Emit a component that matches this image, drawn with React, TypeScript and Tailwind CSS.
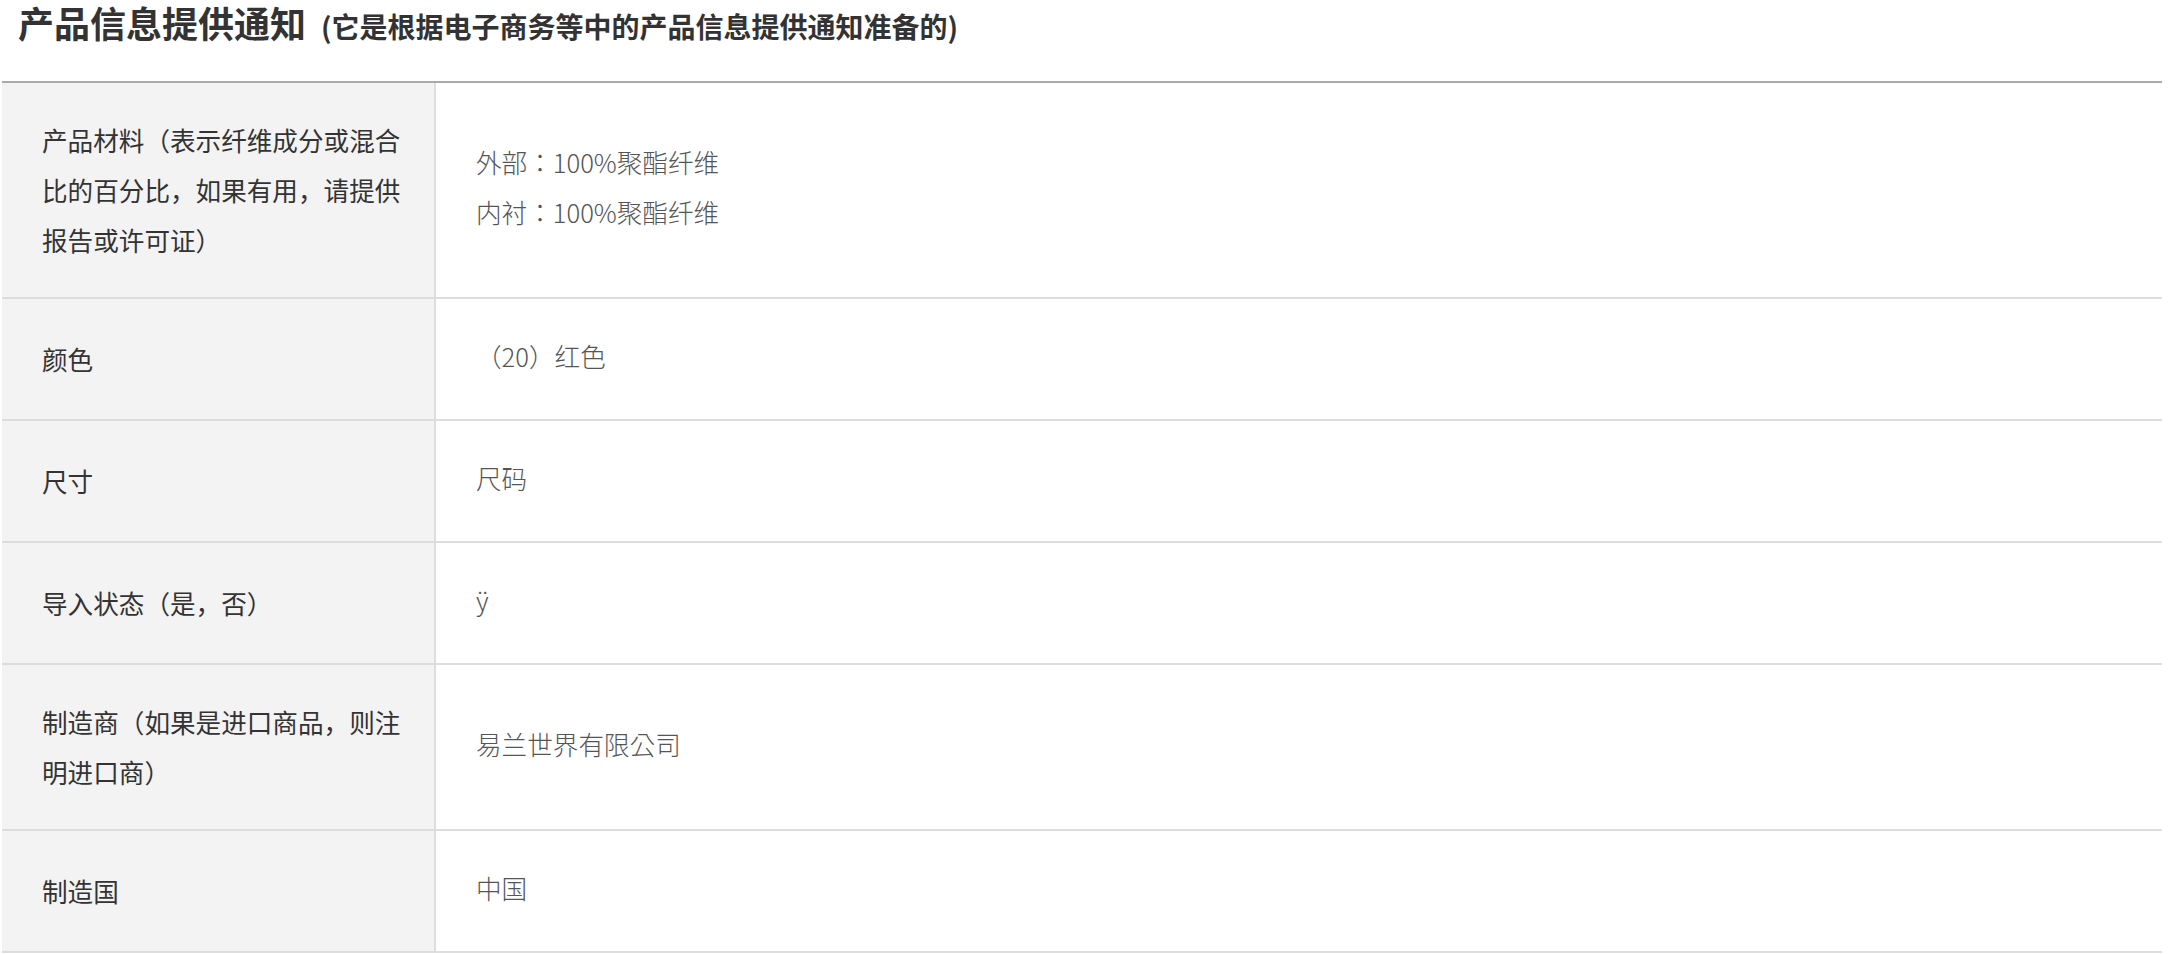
import React from "react";

type Row = {
  label: string;
  values: string[];
};

const rows: Row[] = [
  {
    label: "产品材料（表示纤维成分或混合比的百分比，如果有用，请提供报告或许可证）",
    values: ["外部：100%聚酯纤维", "内衬：100%聚酯纤维"],
  },
  { label: "颜色", values: ["（20）红色"] },
  { label: "尺寸", values: ["尺码"] },
  { label: "导入状态（是，否）", values: ["ÿ"] },
  { label: "制造商（如果是进口商品，则注明进口商）", values: ["易兰世界有限公司"] },
  { label: "制造国", values: ["中国"] },
];

const font = {
  fontFamily: '"Noto Sans CJK SC", "Noto Sans", sans-serif',
};

const valueFont = {
  fontFamily: '"Noto Sans CJK KR", "Noto Sans", sans-serif',
};

export default function App() {
  return (
    <main className="bg-white min-h-screen pl-[2px] pr-[6px]" style={font}>
      <h2 className="flex items-baseline pl-[16px] h-[81px] text-[#333]">
        <span className="text-[36px] leading-[44px] font-bold">产品信息提供通知</span>
        <span className="ml-[15px] text-[28px] leading-[44px] font-bold">
          (它是根据电子商务等中的产品信息提供通知准备的)
        </span>
      </h2>

      <section className="border-t-2 border-[#aaaaaa]">
        {rows.map((row) => (
          <div key={row.label} className="flex border-b-2 border-[#dddddd]">
            <div className="w-[434px] shrink-0 bg-[#f3f3f3] border-r-2 border-[#dddddd] min-h-[120px] py-[32px] pl-[40px] pr-[30px] flex items-center">
              <p className="text-[25.6px] leading-[50px] text-[#333]">{row.label}</p>
            </div>
            <div
              className="flex-1 min-h-[120px] pt-[29px] pb-[35px] pl-[40px] flex flex-col justify-center"
              style={valueFont}
            >
              {row.values.map((v) => (
                <p key={v} className="text-[25.6px] leading-[50px] font-light text-[#555]">
                  {v}
                </p>
              ))}
            </div>
          </div>
        ))}
      </section>
    </main>
  );
}
